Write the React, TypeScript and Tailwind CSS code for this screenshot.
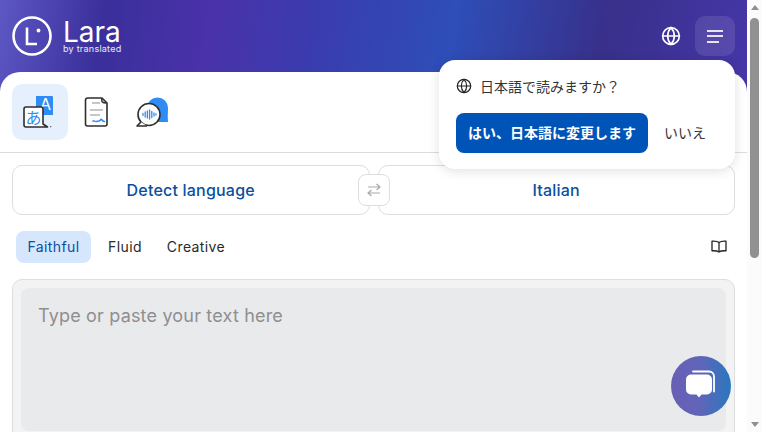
import { Globe } from "lucide-react";

const TranslateIcon = () => (
  <svg width="36" height="36" viewBox="0 0 36 36" fill="none">
    <path d="M14 2h16a1 1 0 0 1 1 1v18h3H14z" fill="#2f8cf5" />
    <text x="23.500" y="16" textAnchor="middle" fontSize="16" fill="#fff" fontFamily="Inter, sans-serif">A</text>
    <path d="M2 15a2 2 0 0 1 2-2h15a2 2 0 0 1 2 2v15l4.500 3H4a2 2 0 0 1-2-2z" fill="#fff" stroke="#2e2e2e" strokeWidth="1.600" strokeLinejoin="round" />
    <text x="11.500" y="29.500" textAnchor="middle" fontSize="16" fill="#2f8cf5" fontFamily="'Noto Sans CJK JP', sans-serif">あ</text>
    <circle cx="28.700" cy="32.700" r="0.6" fill="#333" />
  </svg>
);

const DocIcon = () => (
  <svg width="24" height="30" viewBox="0 0 24 30" fill="none">
    <path d="M3.500 1h14.500l5 5v21a2 2 0 0 1-2 2H3.500a2 2 0 0 1-2-2V3a2 2 0 0 1 2-2z" fill="#fff" stroke="#2e2e2e" strokeWidth="1.600" strokeLinejoin="round" />
    <path d="M18 1.500c-1 2.500 0 4.500 4.500 4.500" stroke="#2e2e2e" strokeWidth="1.600" />
    <path d="M8 6h8M6 13h13M6 18h10" stroke="#b5b5b5" strokeWidth="1.300" />
    <path d="M9 24h1.500M12 24.500c1 0 2-.5 3-.5s1.500-2 2.500-1.500 1 2 3 2" stroke="#2f8cf5" strokeWidth="1.700" strokeLinecap="round" />
  </svg>
);

const VoiceIcon = () => (
  <svg width="32" height="30" viewBox="0 0 32 30" fill="none">
    <path d="M11 11a10.500 10.500 0 0 1 21 0c0 4-.5 8 0 14H18z" fill="#2f8cf5" />
    <circle cx="13" cy="17.500" r="11" fill="#fff" stroke="#2e2e2e" strokeWidth="1.600" />
    <path d="M5 25L1 29h10" fill="#fff" stroke="#2e2e2e" strokeWidth="1.600" strokeLinejoin="round" />
    <path d="M7 16.500v2M9.200 15v5M11.400 14v7M13.600 13v9M15.800 14.500v6M18 16v3M20 17v1" stroke="#2f8cf5" strokeWidth="1.300" strokeLinecap="round" />
  </svg>
);

const SwapIcon = () => (
  <svg width="14" height="14" viewBox="0 0 14 14" fill="none" stroke="#aaa" strokeWidth="1.200">
    <path d="M1 4h12M9.500 1L13 4l-3.500 3" />
    <path d="M13 10H1M4.500 7L1 10l3.500 3" />
  </svg>
);

const BookIcon = () => (
  <svg width="16" height="16" viewBox="0 0 16 16" fill="none" stroke="#222" strokeWidth="1.300" strokeLinejoin="round">
    <path d="M8 3.500C6.500 2.300 4 2 1 2.200v9.600c3-.2 5.500.1 7 1.300 1.500-1.200 4-1.500 7-1.300V2.200C12 2 9.500 2.300 8 3.500z" />
    <path d="M8 3.500v9.500" />
  </svg>
);

const ChatIcon = () => (
  <svg width="32" height="32" viewBox="0 0 32 32" fill="none">
    <path d="M8 1.500h16a5 5 0 0 1 5 5v15" stroke="#fff" strokeWidth="1.800" strokeLinecap="round" />
    <path d="M6 4.500h16a5 5 0 0 1 5 5v10a5 5 0 0 1-5 5h-5.500l-2.500 3-2.500-3H6a5 5 0 0 1-5-5v-10a5 5 0 0 1 5-5z" fill="#fff" />
  </svg>
);

const LaraLogo = () => (
  <div className="flex items-center gap-[11px]">
    <svg width="40" height="40" viewBox="0 0 40 40" fill="none">
      <circle cx="20" cy="20" r="18.500" stroke="#fff" strokeWidth="2.600" />
      <path d="M15 11.500v16.500h10" stroke="#fff" strokeWidth="2.600" />
      <circle cx="26.500" cy="14.500" r="1.900" fill="#fff" />
    </svg>
    <div className="flex flex-col text-white">
      <span className="text-[28px] leading-[24px] font-normal">Lara</span>
      <span className="text-[9px] leading-[9px] tracking-[0.25px] text-white/90">by translated</span>
    </div>
  </div>
);

export default function App() {
  return (
    <div className="flex h-[432px] w-[762px] overflow-hidden bg-white font-['Inter','Noto_Sans_CJK_JP',sans-serif]">
      <div className="relative h-full w-[747px] overflow-hidden">
        <header className="flex h-[92px] items-start justify-between bg-[linear-gradient(100deg,#5d58c4_0%,#3a2f9b_14%,#4a32aa_28%,#3a3cae_42%,#2e4eb8_60%,#38308a_80%,#4636a8_100%)] pl-[12px] pr-[12px] pt-[16px]">
          <LaraLogo />
          <div className="flex items-center gap-[4px]">
            <div className="flex h-[40px] w-[40px] items-center justify-center text-white">
              <Globe size={20} strokeWidth={2} />
            </div>
            <div className="flex h-[40px] w-[40px] flex-col items-start justify-center gap-[3.500px] rounded-[10px] bg-white/10 pl-[12px]">
              <span className="h-[2px] w-[16px] bg-white/85" />
              <span className="h-[2px] w-[16px] bg-white/85" />
              <span className="h-[2px] w-[12px] bg-white/85" />
            </div>
          </div>
        </header>

        <main className="-mt-[20px] h-[360px] rounded-t-[20px] bg-white">
          <div className="flex h-[81px] items-center border-b border-[#dcdcdc] px-[12px] pb-[1px]">
            <div className="flex h-[56px] w-[56px] items-center justify-center rounded-[10px] bg-[#e6f0fd]">
              <TranslateIcon />
            </div>
            <div className="flex h-[56px] w-[56px] items-center justify-center">
              <DocIcon />
            </div>
            <div className="flex h-[56px] w-[56px] items-center justify-center">
              <VoiceIcon />
            </div>
          </div>

          <div className="relative mt-[12px] flex gap-[8px] px-[12px]">
            <div className="flex h-[50px] flex-1 items-center justify-center rounded-[10px] border border-[#dedede] text-[16px] font-medium tracking-[0.2px] text-[#0b4f9e]">
              Detect language
            </div>
            <div className="flex h-[50px] flex-1 items-center justify-center rounded-[10px] border border-[#dedede] text-[16px] font-medium tracking-[0.2px] text-[#0b4f9e]">
              Italian
            </div>
            <div className="absolute left-[358px] top-[9px] flex h-[32px] w-[32px] items-center justify-center rounded-[8px] border border-[#dedede] bg-white">
              <SwapIcon />
            </div>
          </div>

          <div className="mt-[16px] flex h-[32px] items-center justify-between pl-[16px] pr-[20px]">
            <div className="flex items-center gap-[4px] text-[14px] font-normal leading-[20px] tracking-[0.4px]">
              <span className="flex h-[32px] w-[75px] items-center justify-center rounded-[8px] bg-[#d5e6fd] text-[#0b4f9e]">Faithful</span>
              <span className="flex h-[32px] w-[60px] items-center justify-center text-[#2a2a2a]">Fluid</span>
              <span className="ml-[1px] flex h-[32px] w-[72px] items-center justify-center text-[#2a2a2a]">Creative</span>
            </div>
            <BookIcon />
          </div>

          <div className="mx-[12px] mt-[16px] h-[170px] rounded-t-[10px] border border-[#dedede] bg-[#f3f3f3] p-[8px]">
            <div className="h-[143px] rounded-[8px] bg-[#e9eaec] px-[17px] pb-[15px] pt-[16px] text-[18px] leading-[24px] tracking-[0.18px] text-[#8f8f8f]">
              Type or paste your text here
            </div>
          </div>
        </main>

        <div className="absolute left-[439px] top-[60px] h-[109px] w-[296px] rounded-[16px] bg-white px-[17px] pt-[17px] shadow-[0_2px_12px_rgba(0,0,0,0.12)]">
          <div className="flex h-[18px] items-center gap-[8px] text-[14px] text-[#333]">
            <Globe size={16} strokeWidth={1.800} className="text-[#222]" />
            <span>日本語で読みますか？</span>
          </div>
          <div className="mt-[18px] flex items-center gap-[17px]">
            <div className="flex h-[40px] w-[192px] items-center justify-center rounded-[8px] bg-[#0054b8] pb-[2px] text-[14px] font-bold text-white">
              はい、日本語に変更します
            </div>
            <span className="-ml-[1px] -mt-[2px] text-[14px] text-[#333]">いいえ</span>
          </div>
        </div>

        <div className="absolute left-[671px] top-[356px] flex h-[60px] w-[60px] items-center justify-center rounded-full bg-[linear-gradient(90deg,#6a5fb5_0%,#5f65b8_50%,#2a78bf_100%)]">
          <ChatIcon />
        </div>
      </div>

      <div className="flex h-full w-[15px] flex-col items-center bg-[#fbfbfb]">
        <div className="flex h-[15px] w-full items-center justify-center">
          <span className="h-0 w-0 border-x-[4.500px] border-b-[5px] border-x-transparent border-b-[#8f8f8f]" />
        </div>
        <div className="mt-[3px] h-[240px] w-[9px] rounded-[5px] bg-[#919191]" />
        <div className="mt-auto flex h-[15px] w-full items-center justify-center">
          <span className="h-0 w-0 border-x-[4.500px] border-t-[5px] border-x-transparent border-t-[#8f8f8f]" />
        </div>
      </div>
    </div>
  );
}
